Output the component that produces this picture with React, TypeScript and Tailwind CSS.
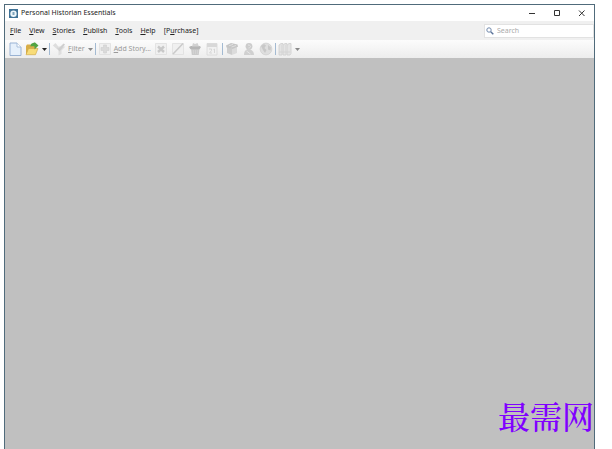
import type { ReactNode } from "react";

interface MenuEntry {
    before?: string;
    hotkey: string;
    after: string;
}

const menu: Array<MenuEntry> = [
    { hotkey: "F", after: "ile" },
    { hotkey: "V", after: "iew" },
    { hotkey: "S", after: "tories" },
    { hotkey: "P", after: "ublish" },
    { hotkey: "T", after: "ools" },
    { hotkey: "H", after: "elp" },
    { before: "[P", hotkey: "u", after: "rchase]" }
];

function Icon({ children }: { children: ReactNode }) {
    return (
        <svg viewBox="0 0 14 14" className="size-3.5 shrink-0" fill="none">
            {children}
        </svg>
    );
}

function Caret({ className }: { className: string }) {
    return (
        <svg viewBox="0 0 5 3" className={`h-[3px] w-[5px] ${className}`}>
            <path d="M0 0h5L2.5 3z" fill="currentColor" />
        </svg>
    );
}

function Separator() {
    return <span className="mx-0.5 h-3 w-px shrink-0 bg-[#a3bad2]" />;
}

function Tool({ label, children }: { label: string; children: ReactNode }) {
    return (
        <button type="button" aria-label={label} className="flex items-center">
            {children}
        </button>
    );
}

/* Faded sheet shared by the disabled story icons. */
function Sheet() {
    return (
        <path
            d="M1.5 1.5h11v11h-11z"
            fill="#f0f0f0"
            stroke="#dedede"
            strokeWidth=".8"
        />
    );
}

function TitleBar() {
    return (
        <header className="flex h-4 items-center bg-white pl-1 pr-2">
            <svg viewBox="0 0 9 9" className="mr-[3px] size-[9px]">
                <path d="M0 0h9v9H0z" fill="#3f7296" />
                <circle cx="4.5" cy="4.7" r="3.2" fill="#eef6fa" />
                <path d="M3.5 3h2v3h-2z" fill="#7ea5bc" />
            </svg>
            <h1 className="text-[7px] leading-4 text-[#222]">
                Personal Historian Essentials
            </h1>
            <div className="ml-auto flex gap-4 text-[#333]">
                <Tool label="Minimize">
                    <svg viewBox="0 0 9 9" className="size-[9px]">
                        <path d="M2 4.5h6" stroke="currentColor" />
                    </svg>
                </Tool>
                <Tool label="Maximize">
                    <svg viewBox="0 0 9 9" className="size-[9px]" fill="none">
                        <path d="M2.5 1.5h5v5h-5z" stroke="currentColor" />
                    </svg>
                </Tool>
                <Tool label="Close">
                    <svg viewBox="0 0 9 9" className="size-[9px]">
                        <path d="M2 1.5l5.5 5.5M7.5 1.5L2 7" stroke="currentColor" />
                    </svg>
                </Tool>
            </div>
        </header>
    );
}

function MenuBar() {
    return (
        <nav className="flex h-[19px] items-center justify-between bg-[#f0f0f0] pl-[5px]">
            <div className="flex gap-2">
                {menu.map((item) => (
                    <button
                        key={item.after}
                        type="button"
                        className="text-[7px] leading-4 text-[#222]"
                    >
                        {item.before}
                        <u className="underline-offset-1">{item.hotkey}</u>
                        {item.after}
                    </button>
                ))}
            </div>
            <label className="flex h-3.5 w-[110px] items-center gap-[3px] border border-[#e2e2e2] bg-white pl-px">
                <svg viewBox="0 0 8 8" className="size-2" fill="none">
                    <circle cx="3" cy="3" r="2.2" stroke="#7189ac" />
                    <path d="M4.7 4.7L7.3 7.3" stroke="#5b7399" strokeWidth="1.4" />
                </svg>
                <input
                    type="text"
                    aria-label="Search"
                    placeholder="Search"
                    className="min-w-0 flex-1 text-[7px] leading-3 outline-none placeholder:text-[#aaa]"
                />
            </label>
        </nav>
    );
}

function ToolBar() {
    return (
        <div className="flex h-[18px] items-center bg-linear-to-b from-[#fcfcfc] to-[#ededed] pl-[3px] text-[7px] text-[#999]">
            <Tool label="New">
                <Icon>
                    <path d="M2 1h7l4 4v8.5H2z" fill="#e6f0fb" stroke="#91acd0" strokeWidth=".9" />
                    <path d="M9 1v4h4" fill="#fff" stroke="#a3bad8" strokeWidth=".9" />
                </Icon>
            </Tool>
            <span className="ml-[3px] flex items-center gap-[3px]">
                <Tool label="Open">
                    <Icon>
                        <path d="M1 4l1-1.500h3.500L7 4h4v8H1z" fill="#d9ae48" />
                        <path d="M1 12.700L3.500 6.500H13l-2.500 6.200z" fill="#f8dc78" stroke="#cba544" strokeWidth=".6" />
                        <path d="M5.500 4.500C5.500 1.500 7.500.8 9.500.8V0L13.500 3.500 9.500 7.500V4.500C8 4 7 4 5.500 4.500z" fill="#52a444" />
                    </Icon>
                </Tool>
                <Caret className="text-[#222]" />
            </span>
            <Separator />
            <button type="button" className="flex items-center">
                <Icon>
                    <path d="M.8 3.500L3.500 1l2.800 3.500h7.200L9.500 8.500V12L6.500 13.500v-5z" fill="#dedede" />
                    <path d="M4.500 5l2 1.500L11.500 1.500l1.500 1-5.500 7z" fill="#cfcfcf" />
                </Icon>
                <span className="mr-[3px] ml-0.5">
                    <u className="underline-offset-1">F</u>ilter
                </span>
                <Caret className="text-[#888]" />
            </button>
            <Separator />
            <button type="button" className="flex items-center gap-0.5">
                <Icon>
                    <Sheet />
                    <path d="M5.500 3h3v2.500H11v3H8.500V11h-3V8.500H3v-3h2.500z" fill="#dadada" stroke="#cfcfcf" strokeWidth=".6" />
                </Icon>
                <span>
                    <u className="underline-offset-1">A</u>dd Story...
                </span>
            </button>
            <span className="mr-px ml-[3px] flex gap-[3px]">
                <Tool label="Delete story">
                    <Icon>
                        <Sheet />
                        <path d="M4 4.500l6 5.500M10 4.500L4 10" stroke="#c8c8c8" strokeWidth="2.400" />
                    </Icon>
                </Tool>
                <Tool label="Edit story">
                    <Icon>
                        <Sheet />
                        <path d="M2 12L12 1.500" stroke="#cacaca" strokeWidth="1.500" />
                    </Icon>
                </Tool>
                <Tool label="Trash">
                    <Icon>
                        <path d="M3 6.500h8.500l-.8 6.500H3.800z" fill="#cacaca" />
                        <path d="M1 5l2-1h8.500L13 5l-1.500 2.200H2.500z" fill="#b6b6b6" />
                        <path d="M4 4.500L5 1l2 1 2.500-1L11 4.500z" fill="#d2d2d2" />
                        <path d="M5.500 8v4M7.500 8v4M9.500 8v4" stroke="#d6d6d6" strokeWidth=".7" />
                    </Icon>
                </Tool>
                <Tool label="Calendar">
                    <Icon>
                        <path d="M2 1.500h10v11.500H2z" fill="#f1f1f1" stroke="#d8d8d8" strokeWidth=".8" />
                        <path d="M2 1.500h10v3.500H2z" fill="#d8d8d8" />
                        <path d="M4 7h2.500v1.500L4.500 11H7M8.500 7.500l1-.5v4" stroke="#d0d0d0" strokeWidth=".8" />
                    </Icon>
                </Tool>
            </span>
            <Separator />
            <span className="flex gap-[3px]">
                <Tool label="Box">
                    <Icon>
                        <path d="M2 5L7 6.500V13L2 11z" fill="#cdcdcd" />
                        <path d="M7 6.500L12 5v6l-5 2z" fill="#dbdbdb" />
                        <path d="M1 3.500L6 1l6.500 1.500.5 2.300L7.500 7 1.500 5.500z" fill="#c6c6c6" />
                        <path d="M4 3.800l4-1.500M6.500 5l4.500-1.500" stroke="#e0e0e0" />
                    </Icon>
                </Tool>
                <Tool label="People">
                    <Icon>
                        <circle cx="7" cy="4.300" r="3.400" fill="#cccccc" />
                        <path d="M2 13c0-3.500 1.800-6 4.500-6s5.500 2.500 5.500 6z" fill="#d0d0d0" />
                        <path d="M6 3c1.500 0 2.500.5 2.500 1.500S7.500 6 6.500 6M4.500 9l4 3" stroke="#e6e6e6" />
                    </Icon>
                </Tool>
                <Tool label="Places">
                    <Icon>
                        <circle cx="7" cy="7" r="5.900" fill="#dedede" stroke="#d0d0d0" strokeWidth=".8" />
                        <path d="M2 4l3-2 2 1.500L5.500 6l2 2L6 11 4 8zM9 3l3 2.500-.5 3L9 7.500z" fill="#c8c8c8" />
                    </Icon>
                </Tool>
            </span>
            <Separator />
            <button type="button" aria-label="Timeline" className="flex items-center gap-[3px]">
                <Icon>
                    <path
                        d="M1 3l2-1.500h2L4 3v10H1zM5 3l2-1.500h2L8 3v10H5zM9 3l2-1.500h2V11.500L12 13H9z"
                        fill="#e4e4e4"
                        stroke="#cecece"
                        strokeWidth=".8"
                    />
                    <path d="M1 10h11" stroke="#d4d4d4" />
                </Icon>
                <Caret className="text-[#888]" />
            </button>
        </div>
    );
}

export default function App() {
    return (
        <main className="flex h-screen bg-white pt-1 pr-[17px] pl-1 font-['Noto_Sans',sans-serif]">
            <section className="flex min-w-0 flex-1 flex-col border border-b-0 border-[#506b7b]">
                <TitleBar />
                <MenuBar />
                <ToolBar />
                <div className="flex flex-1 items-end justify-end bg-[#c0c0c0] pb-2.5">
                    <p className="font-['Noto_Serif_CJK_SC','Noto_Sans_CJK_SC',serif] text-[32px] font-medium leading-12 text-[#8000ff]">
                        最需网
                    </p>
                </div>
            </section>
        </main>
    );
}
